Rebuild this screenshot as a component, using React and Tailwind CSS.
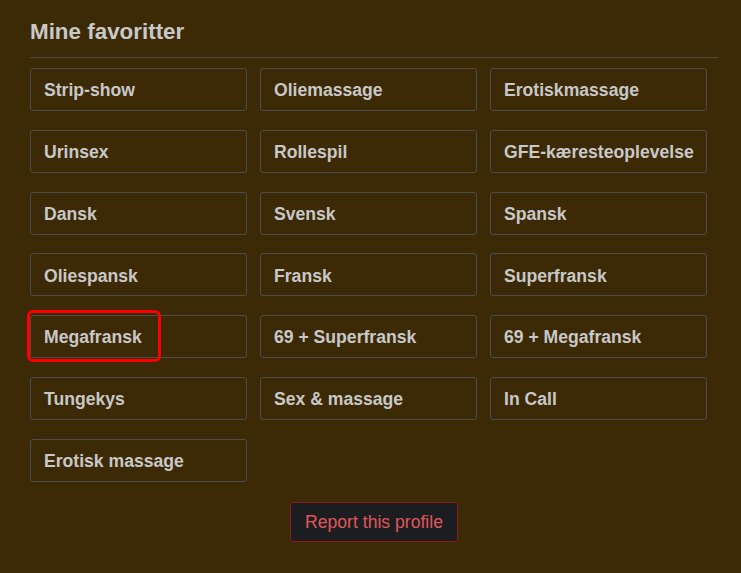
const FAVORITTER = [
  "Strip-show",
  "Oliemassage",
  "Erotiskmassage",
  "Urinsex",
  "Rollespil",
  "GFE-kæresteoplevelse",
  "Dansk",
  "Svensk",
  "Spansk",
  "Oliespansk",
  "Fransk",
  "Superfransk",
  "Megafransk",
  "69 + Superfransk",
  "69 + Megafransk",
  "Tungekys",
  "Sex & massage",
  "In Call",
  "Erotisk massage",
];

export default function App() {
  return (
    <div className="min-h-[573px] w-[741px] bg-[#3c2906] px-[30px] pt-[18px] font-['Liberation_Sans',Arial,sans-serif]">
      <h2 className="w-[688px] border-b border-[#4f4a42] pb-[11px] text-[22.4px] font-bold leading-[28px] text-[#c9c9c9]">
        Mine favoritter
      </h2>

      <div className="mt-[10px] grid grid-cols-[217px_217px_217px] gap-x-[13px] gap-y-[18.8px]">
        {FAVORITTER.map((name) => (
          <div
            key={name}
            className="relative flex h-[43px] items-center whitespace-nowrap rounded-[3px] border border-[#4d4d4d] px-[13px] pt-[2px] text-[17.6px] font-bold text-[#c8c8c8]"
          >
            {name}
            {name === "Megafransk" && (
              <span className="pointer-events-none absolute -left-[4px] -top-[6px] h-[52px] w-[134px] rounded-[6px] border-[3px] border-[#ff0000]" />
            )}
          </div>
        ))}
      </div>

      <div className="flex w-[688px] justify-center pt-[20px]">
        <button className="h-[40px] w-[168px] rounded-[3px] border border-[#8a1c1c] bg-[#1c1d21] text-[17.6px] text-[#e0575a]">
          Report this profile
        </button>
      </div>
    </div>
  );
}
